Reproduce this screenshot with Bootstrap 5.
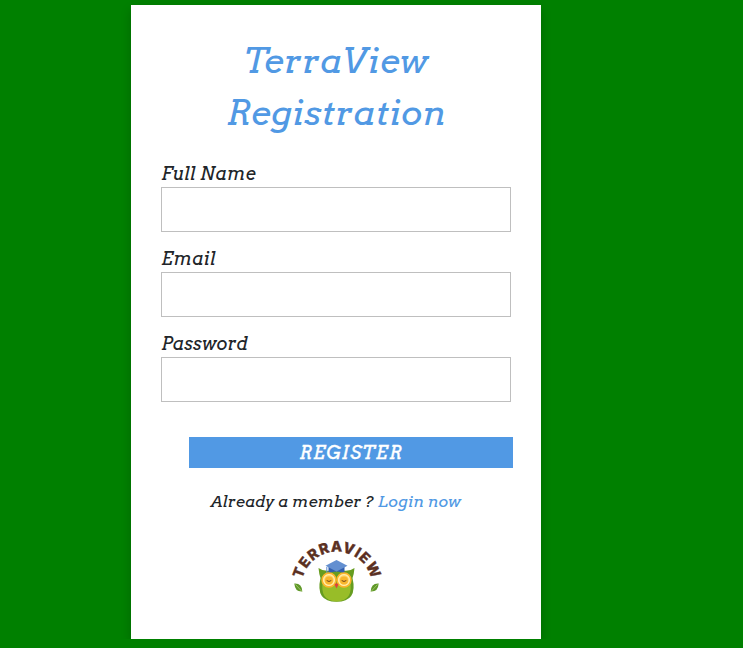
<!DOCTYPE html>
<html lang="en">
<head>
<meta charset="utf-8">
<meta name="viewport" content="width=device-width, initial-scale=1">
<title>TerraView Registration</title>
<link href="https://cdn.jsdelivr.net/npm/bootstrap@5.3.0/dist/css/bootstrap.min.css" rel="stylesheet">
<style>
body{background:#008000;font-family:Arvo,"DejaVu Serif",serif;font-style:italic;color:#212529;overflow:hidden}
.page-wrap{padding:5px 0 0 131px}
.signup{width:410px;height:634px;padding:30px;box-shadow:0 5px 10px rgba(0,0,0,.2)}
.signup h1{font-size:35px;line-height:52px;color:#5199e4;margin:0 0 21px}
.field-label{font-size:18px;line-height:27px;height:27px}
.field-box{height:45px;border:1px solid #bfbfbf;margin-bottom:13px}
.submit-btn{width:324px;height:31px;margin:35px 0 0 28px;background:#5199e4;color:#fff;font-size:18px;font-weight:500;line-height:31px;letter-spacing:1px;-webkit-text-stroke:.35px #fff}
.member-line{font-size:16px;line-height:24px;margin-top:22px;white-space:nowrap}
.member-line a{color:#5199e4}
.brand-logo{margin:22px 0 0 126px}
</style>
</head>
<body>
<main class="page-wrap">
<form class="signup bg-white">
<h1 class="text-center fw-normal">TerraView<br>Registration</h1>
<label class="field-label d-block" for="fullname">Full Name</label>
<input class="field-box form-control rounded-0" id="fullname" type="text">
<label class="field-label d-block" for="email">Email</label>
<input class="field-box form-control rounded-0" id="email" type="email">
<label class="field-label d-block" for="password">Password</label>
<input class="field-box form-control rounded-0 mb-0" id="password" type="password">
<button class="submit-btn btn rounded-0 border-0 p-0 fst-italic d-block" type="button">REGISTER</button>
<div class="member-line text-center">Already a member ? <a class="text-decoration-none" href="#">Login now</a></div>
<svg class="brand-logo d-block" width="100" height="70" viewBox="287 536 100 70">
<path id="arc" d="M301.500 587A35.300 35.300 0 0 1 372.100 587" fill="none"/>
<text font-family="Inter,sans-serif" font-style="normal" font-weight="800" font-size="14.500" fill="#5b3022" stroke="#5b3022" stroke-width=".35" text-anchor="middle"><textPath href="#arc" startOffset="50%" textLength="95">TERRAVIEW</textPath></text>
<path d="M318.500 568Q323 571.500 330 570.500H343Q350 571.500 354.500 568Q354 574 352.500 578Q358 601.800 336.500 601.800Q315 601.800 320.500 578Q319 574 318.500 568Z" fill="#669c20"/>
<path d="M323 580Q328 586 336.500 584Q345 586 350 580Q354 601 336.500 601.500Q319 601 323 580Z" fill="#98bd28"/>
<path d="M328.500 567V573.500Q336.500 569.500 344.500 573.500V567Z" fill="#315eae"/>
<path d="M336.500 560L347.500 565.800L336.500 571.500L325.500 565.800Z" fill="#638fd0"/>
<path d="M326.800 567V573" stroke="#638fd0"/>
<g fill="#ffd36a" stroke="#fbb52c" stroke-width="1.600"><circle cx="329" cy="580" r="6.900"/><circle cx="344" cy="580" r="6.900"/></g>
<g fill="none" stroke="#fff0b0" stroke-width="1.100"><circle cx="329" cy="580" r="5.400"/><circle cx="344" cy="580" r="5.400"/></g>
<g fill="#f8b62d"><circle cx="329" cy="580.500" r="4"/><circle cx="344" cy="580.500" r="4"/></g>
<path d="M326.700 580.500Q329 582.500 331.300 580.500M341.700 580.500Q344 582.500 346.300 580.500" fill="none" stroke="#70451b" stroke-width="1"/>
<path d="M334.500 584.500L336.500 583L338.500 584.500L336.500 588.500Z" fill="#df423c"/>
<path d="M294.300 583.500Q302 583 302.300 591.500Q295 592 294.300 583.500Z" fill="#5f9828"/><path d="M295.500 584.500L302 591.500" stroke="#c4df91" stroke-width=".6"/>
<path d="M378.700 583.500Q371 583 370.700 591.500Q378 592 378.700 583.500Z" fill="#5f9828"/><path d="M377.500 584.500L371 591.500" stroke="#c4df91" stroke-width=".6"/>
</svg>
</form>
</main>
<script src="https://cdn.jsdelivr.net/npm/bootstrap@5.3.0/dist/js/bootstrap.bundle.min.js"></script>
</body>
</html>
